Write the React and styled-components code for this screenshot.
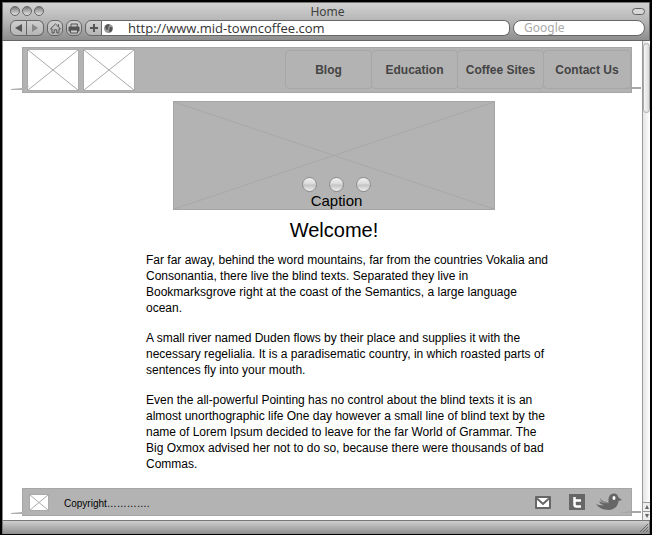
import React from "react";
import styled, { createGlobalStyle } from "styled-components";

const sans = '"Liberation Sans", Arial, Helvetica, sans-serif';
const chromeFont = '"Noto Sans", "Open Sans", sans-serif';
const addressFont = '"Open Sans", "Noto Sans", sans-serif';

const GlobalStyle = createGlobalStyle`
  * { box-sizing: border-box; }
  body { margin: 0; background: #000; font-family: ${sans}; color: #000; }
  button, input { font: inherit; margin: 0; padding: 0; }
  svg { display: block; }
`;

const Window = styled.div`
  display: flex;
  flex-direction: column;
  min-height: 100vh;
  border: 2px solid #000;
  border-bottom-width: 1px;
`;

const Chrome = styled.header`
  height: 39px;
  border: 1px solid #666;
  border-top-color: #777;
  background: linear-gradient(#d2d2d2, #b4b4b4 50%, #8e8e8e);
`;

const TitleBar = styled.div`
  display: grid;
  grid-template-columns: 1fr auto 1fr;
  align-items: center;
  height: 17px;
  padding: 0 4px 1px 7px;
`;

const Title = styled.h1`
  margin: 1px 0 0;
  font: 400 12px/15px ${chromeFont};
  color: #404040;
`;

const Lights = styled.div`
  display: flex;
  gap: 2px;
`;

const Light = styled.button`
  width: 10px;
  height: 10px;
  border: 1px solid #666;
  border-radius: 50%;
  background: linear-gradient(#777, #aaa 45%, #e2e2e2);
`;

const Pill = styled.button`
  justify-self: end;
  width: 13px;
  height: 7px;
  border: 1px solid #606060;
  border-radius: 4px;
  background: #d8d8d8;
`;

const Toolbar = styled.div`
  display: flex;
  gap: 3px;
  padding: 0 4px 0 7px;
`;

const ToolButton = styled.button`
  display: grid;
  place-items: center;
  width: ${(p) => (p.$joined ? "17px" : "16px")};
  height: 16px;
  border: 1px solid #666;
  border-radius: ${(p) =>
    p.$joined === "left" ? "6px 0 0 6px" : p.$joined === "right" ? "0 6px 6px 0" : "6px"};
  border-left-width: ${(p) => (p.$joined === "right" ? 0 : "1px")};
  background: linear-gradient(#cfcfcf, #b5b5b5);
  color: ${(p) => (p.$dim ? "#888" : "#555")};
`;

const Group = styled.div`
  display: flex;
`;

const Address = styled.form`
  display: flex;
  flex: 1;
  min-width: 0;
`;

const AddressField = styled.label`
  display: flex;
  align-items: center;
  gap: 15px;
  flex: 1;
  min-width: 0;
  height: 16px;
  padding-left: 2px;
  border: 1px solid #666;
  border-left: 0;
  border-radius: 0 6px 6px 0;
  background: #fff;
`;

const FieldInput = styled.input`
  flex: 1;
  min-width: 0;
  height: 14px;
  border: 0;
  outline: 0;
  background: transparent;
  font: ${(p) => (p.type === "search" ? `400 12px/14px ${chromeFont}` : `400 13px/14px ${addressFont}`)};
  color: #333;
  &::placeholder { color: #aaa; opacity: 1; }
`;

const Search = styled.label`
  display: flex;
  width: 132px;
  height: 16px;
  padding: 0 10px;
  border: 1px solid #666;
  border-radius: 8px;
  background: #fff;
`;

const Viewport = styled.div`
  display: flex;
  flex: 1;
  border: solid #888;
  border-width: 0 0 0 1px;
  background: #fff;
`;

const Page = styled.div`
  display: flex;
  flex-direction: column;
  flex: 1;
  min-width: 0;
  padding: 6px 10px 4px 19px;
`;

const SiteBar = styled.div`
  position: relative;
  display: flex;
  background: #b3b3b3;
  border: 1px solid #a6a6a6;
`;

const SiteHeader = styled(SiteBar).attrs({ as: "header" })`
  gap: 4px;
  height: 46px;
  padding: 1px 0 1px 4px;
`;

const SiteFooter = styled(SiteBar).attrs({ as: "footer" })`
  align-items: center;
  height: 28px;
  margin-top: auto;
  padding: 0 9px 0 6px;
`;

const Stroke = styled.svg`
  position: absolute;
  bottom: ${(p) => (p.$low ? "0" : "1px")};
  ${(p) => (p.$side === "left" ? "left: -12px;" : "right: -10px;")}
`;

const Picture = styled.svg`
  width: ${(p) => (p.$small ? "20px" : "52px")};
  height: ${(p) => (p.$small ? "17px" : "42px")};
  background: #fff;
  border: 1px solid #a9a9a9;
`;

const Nav = styled.nav`
  display: flex;
  align-items: flex-start;
  margin: 1px 0 0 auto;
`;

const NavLink = styled.a`
  display: grid;
  place-items: center;
  width: 87px;
  height: 39px;
  margin-left: -1px;
  &:first-child { margin-left: 0; }
  &:last-child { width: 88px; }
  border: 1px solid #a7a7a7;
  border-radius: 4px;
  font: 700 12px/16px ${sans};
  color: #444;
  text-decoration: none;
`;

const Main = styled.main`
  display: flex;
  flex-direction: column;
  align-items: center;
  padding: 8px 0 16px 14px;
`;

const Hero = styled.figure`
  position: relative;
  display: flex;
  flex-direction: column;
  align-items: center;
  justify-content: flex-end;
  width: 100%;
  max-width: 322px;
  height: 109px;
  margin: 0;
  border: 1px solid #a5a5a5;
  background: #b3b3b3;
`;

const HeroCross = styled.svg`
  position: absolute;
  inset: 0;
  width: 100%;
  height: 100%;
`;

const Dots = styled.div`
  position: relative;
  display: flex;
  gap: 12px;
  padding-left: 5px;
`;

const Dot = styled.button`
  width: 15px;
  height: 15px;
  border: 1px solid #8c8c8c;
  border-radius: 50%;
  background: linear-gradient(#f2f2f2, #d8d8d8 48%, #c2c2c2 52%, #eee);
`;

const Caption = styled.figcaption`
  position: relative;
  padding-left: 5px;
  font-size: 15px;
  line-height: 17px;
`;

const Heading = styled.h2`
  margin: 8px 0 10px;
  font: 400 20px/24px ${sans};
`;

const Article = styled.article`
  display: grid;
  gap: 14px;
  width: 100%;
  max-width: 434px;
  padding-left: 29px;
`;

const Paragraph = styled.p`
  margin: 0;
  font-size: 12px;
  line-height: 16px;
`;

const Copyright = styled.p`
  margin: 3px 0 0 15px;
  font-size: 10px;
  line-height: 14px;
`;

const Social = styled.div`
  display: flex;
  align-items: center;
  gap: 11px;
  margin-left: auto;
`;

const SocialLink = styled.a`
  display: block;
  &:first-child { margin-right: 7px; }
`;

const Scrollbar = styled.div`
  display: flex;
  flex-direction: column;
  width: 8px;
  border-left: 1px solid #999;
  background: linear-gradient(90deg, #e4e4e4, #fff);
`;

const Thumb = styled.div`
  height: 70px;
  margin: 2px 0 auto;
  border: 1px solid #aaa;
  border-radius: 4px;
  background: linear-gradient(90deg, #f6f6f6, #dadada);
`;

const Arrow = styled.button`
  display: grid;
  place-items: center;
  height: 9px;
  border: 0;
  border-top: 1px solid #999;
  background: #eee;
`;

const StatusBar = styled.div`
  display: flex;
  align-items: flex-end;
  justify-content: flex-end;
  height: 14px;
  padding: 0 1px 2px;
  border: 1px solid #777;
  border-width: 1px 1px 0;
  background: linear-gradient(#cfcfcf, #8e8e8e);
`;

const Cross = ({ color = "#a9a9a9" }) => (
  <path d="M0 0L100 100M100 0L0 100" stroke={color} fill="none" vectorEffect="non-scaling-stroke" />
);

const Placeholder = ({ small }) => (
  <Picture $small={small} viewBox="0 0 100 100" preserveAspectRatio="none" role="img" aria-label="Picture">
    <Cross />
  </Picture>
);

const EdgeStrokes = ({ low }) => (
  <>
    <Stroke $side="left" $low={low} width="18" height="5" aria-hidden="true">
      <path d="M0 3L11 2L18 0L16 3L11 4L0 4Z" fill="#b0b0b0" />
    </Stroke>
    <Stroke $side="right" $low={low} width="21" height="5" aria-hidden="true">
      <path d="M0 3L10 1L21 1V3L10 3Z" fill="#a6a6a6" />
    </Stroke>
  </>
);

const links = ["Blog", "Education", "Coffee Sites", "Contact Us"];

const paragraphs = [
  "Far far away, behind the word mountains, far from the countries Vokalia and Consonantia, there live the blind texts. Separated they live in Bookmarksgrove right at the coast of the Semantics, a large language ocean.",
  "A small river named Duden flows by their place and supplies it with the necessary regelialia. It is a paradisematic country, in which roasted parts of sentences fly into your mouth.",
  "Even the all-powerful Pointing has no control about the blind texts it is an almost unorthographic life One day however a small line of blind text by the name of Lorem Ipsum decided to leave for the far World of Grammar. The Big Oxmox advised her not to do so, because there were thousands of bad Commas.",
];

function BrowserChrome() {
  return (
    <Chrome>
      <TitleBar>
        <Lights>
          <Light aria-label="Close" />
          <Light aria-label="Minimize" />
          <Light aria-label="Zoom" />
        </Lights>
        <Title>Home</Title>
        <Pill aria-label="Toggle toolbar" />
      </TitleBar>
      <Toolbar>
        <Group>
          <ToolButton $joined="left" aria-label="Back">
            <svg width="7" height="8"><path d="M7 0V8L0 4Z" fill="currentColor" /></svg>
          </ToolButton>
          <ToolButton $joined="right" $dim aria-label="Forward">
            <svg width="6" height="8"><path d="M0 0V8L6 4Z" fill="currentColor" /></svg>
          </ToolButton>
        </Group>
        <ToolButton aria-label="Home page">
          <svg width="11" height="11" fill="none" stroke="currentColor">
            <path d="M.5 5.8L5.5 1L10.5 5.8H9V10H6.8V6.8H4.2V10H2V5.8ZM8.5 1.2V3.5" />
          </svg>
        </ToolButton>
        <ToolButton aria-label="Print">
          <svg width="12" height="11" fill="none" stroke="currentColor">
            <path d="M3 4V1H9.5L9 4" />
            <path d="M1 4H11V8H1Z" fill="currentColor" />
            <path d="M2.5 7H9.5V10H2.5Z" fill="#ccc" />
          </svg>
        </ToolButton>
        <Address onSubmit={(e) => e.preventDefault()}>
          <ToolButton $joined="left" type="button" aria-label="Add bookmark">
            <svg width="8" height="8"><path d="M4 0V8M0 4H8" stroke="currentColor" strokeWidth="2" /></svg>
          </ToolButton>
          <AddressField>
            <svg width="9" height="9" aria-hidden="true">
              <circle cx="4.5" cy="4.5" r="4.5" fill="#999" />
              <path d="M2 1L5 0L5.5 2L4 3L4.5 5L2.5 6L1 3ZM6 3L8.500 3L8 7L5.500 8.500L5 6Z" fill="#555" />
            </svg>
            <FieldInput type="text" aria-label="Address" defaultValue="http://www.mid-towncoffee.com" />
          </AddressField>
        </Address>
        <Search>
          <FieldInput type="search" aria-label="Search" placeholder="Google" />
        </Search>
      </Toolbar>
    </Chrome>
  );
}

export default function App() {
  return (
    <Window>
      <GlobalStyle />
      <BrowserChrome />
      <Viewport>
        <Page>
          <SiteHeader>
            <Placeholder />
            <Placeholder />
            <Nav>
              {links.map((label) => (
                <NavLink key={label} href="#">{label}</NavLink>
              ))}
            </Nav>
            <EdgeStrokes />
          </SiteHeader>
          <Main>
            <Hero>
              <HeroCross viewBox="0 0 100 100" preserveAspectRatio="none" aria-hidden="true">
                <Cross color="#a8a8a8" />
              </HeroCross>
              <Dots>
                <Dot aria-label="Slide 1" />
                <Dot aria-label="Slide 2" />
                <Dot aria-label="Slide 3" />
              </Dots>
              <Caption>Caption</Caption>
            </Hero>
            <Heading>Welcome!</Heading>
            <Article>
              {paragraphs.map((text) => (
                <Paragraph key={text}>{text}</Paragraph>
              ))}
            </Article>
          </Main>
          <SiteFooter>
            <Placeholder small />
            <Copyright>Copyright………….</Copyright>
            <Social>
              <SocialLink href="#" aria-label="Email">
                <svg width="16" height="13">
                  <rect width="16" height="13" rx="1" fill="#666" />
                  <rect x="2" y="2" width="12" height="9" fill="#fff" />
                  <path d="M2 2.500L8 8L14 2.500" fill="none" stroke="#666" strokeWidth="2" />
                </svg>
              </SocialLink>
              <SocialLink href="#" aria-label="Twitter">
                <svg width="16" height="16">
                  <rect width="16" height="16" fill="#666" />
                  <path d="M5.500 3V10.500Q5.500 12.500 7.500 12.500H12M5.500 6.500H12" fill="none" stroke="#fff" strokeWidth="2.500" />
                </svg>
              </SocialLink>
              <SocialLink href="#" aria-label="Twitter bird">
                <svg width="26" height="18" viewBox="0 0 26 18" fill="#666">
                  <path d="M4 4.500C6 6.500 9 7.500 13 8L12 13C8 12.500 4 10.500 4 4.500Z" fill="#8a8a8a" />
                  <path d="M4.500 5C6.500 7 9 8 12 8.500" fill="none" stroke="#ccc" />
                  <path d="M0 11C3 12.500 6 12.500 8 12C5 11.500 3.500 10 3 8.500C7 10.500 10 10.500 13 10C11.500 5 13.500 .500 18 .500C20.500 .500 22 2.500 22.500 4.500L26 7L22.500 8C22 13.500 18 17 12.500 17C7 17 3 15 0 11Z" />
                  <ellipse cx="18" cy="5" rx="1.500" ry="2" fill="#fff" />
                </svg>
              </SocialLink>
            </Social>
            <EdgeStrokes low />
          </SiteFooter>
        </Page>
        <Scrollbar>
          <Thumb />
          <Arrow aria-label="Scroll up">
            <svg width="4" height="4"><path d="M2 0L4 4H0Z" fill="#666" /></svg>
          </Arrow>
          <Arrow aria-label="Scroll down">
            <svg width="4" height="4"><path d="M2 4L4 0H0Z" fill="#666" /></svg>
          </Arrow>
        </Scrollbar>
      </Viewport>
      <StatusBar>
        <svg width="8" height="8" aria-hidden="true"><path d="M0 8L8 0M3 8L8 3M6 8L8 6" stroke="#666" /></svg>
      </StatusBar>
    </Window>
  );
}
